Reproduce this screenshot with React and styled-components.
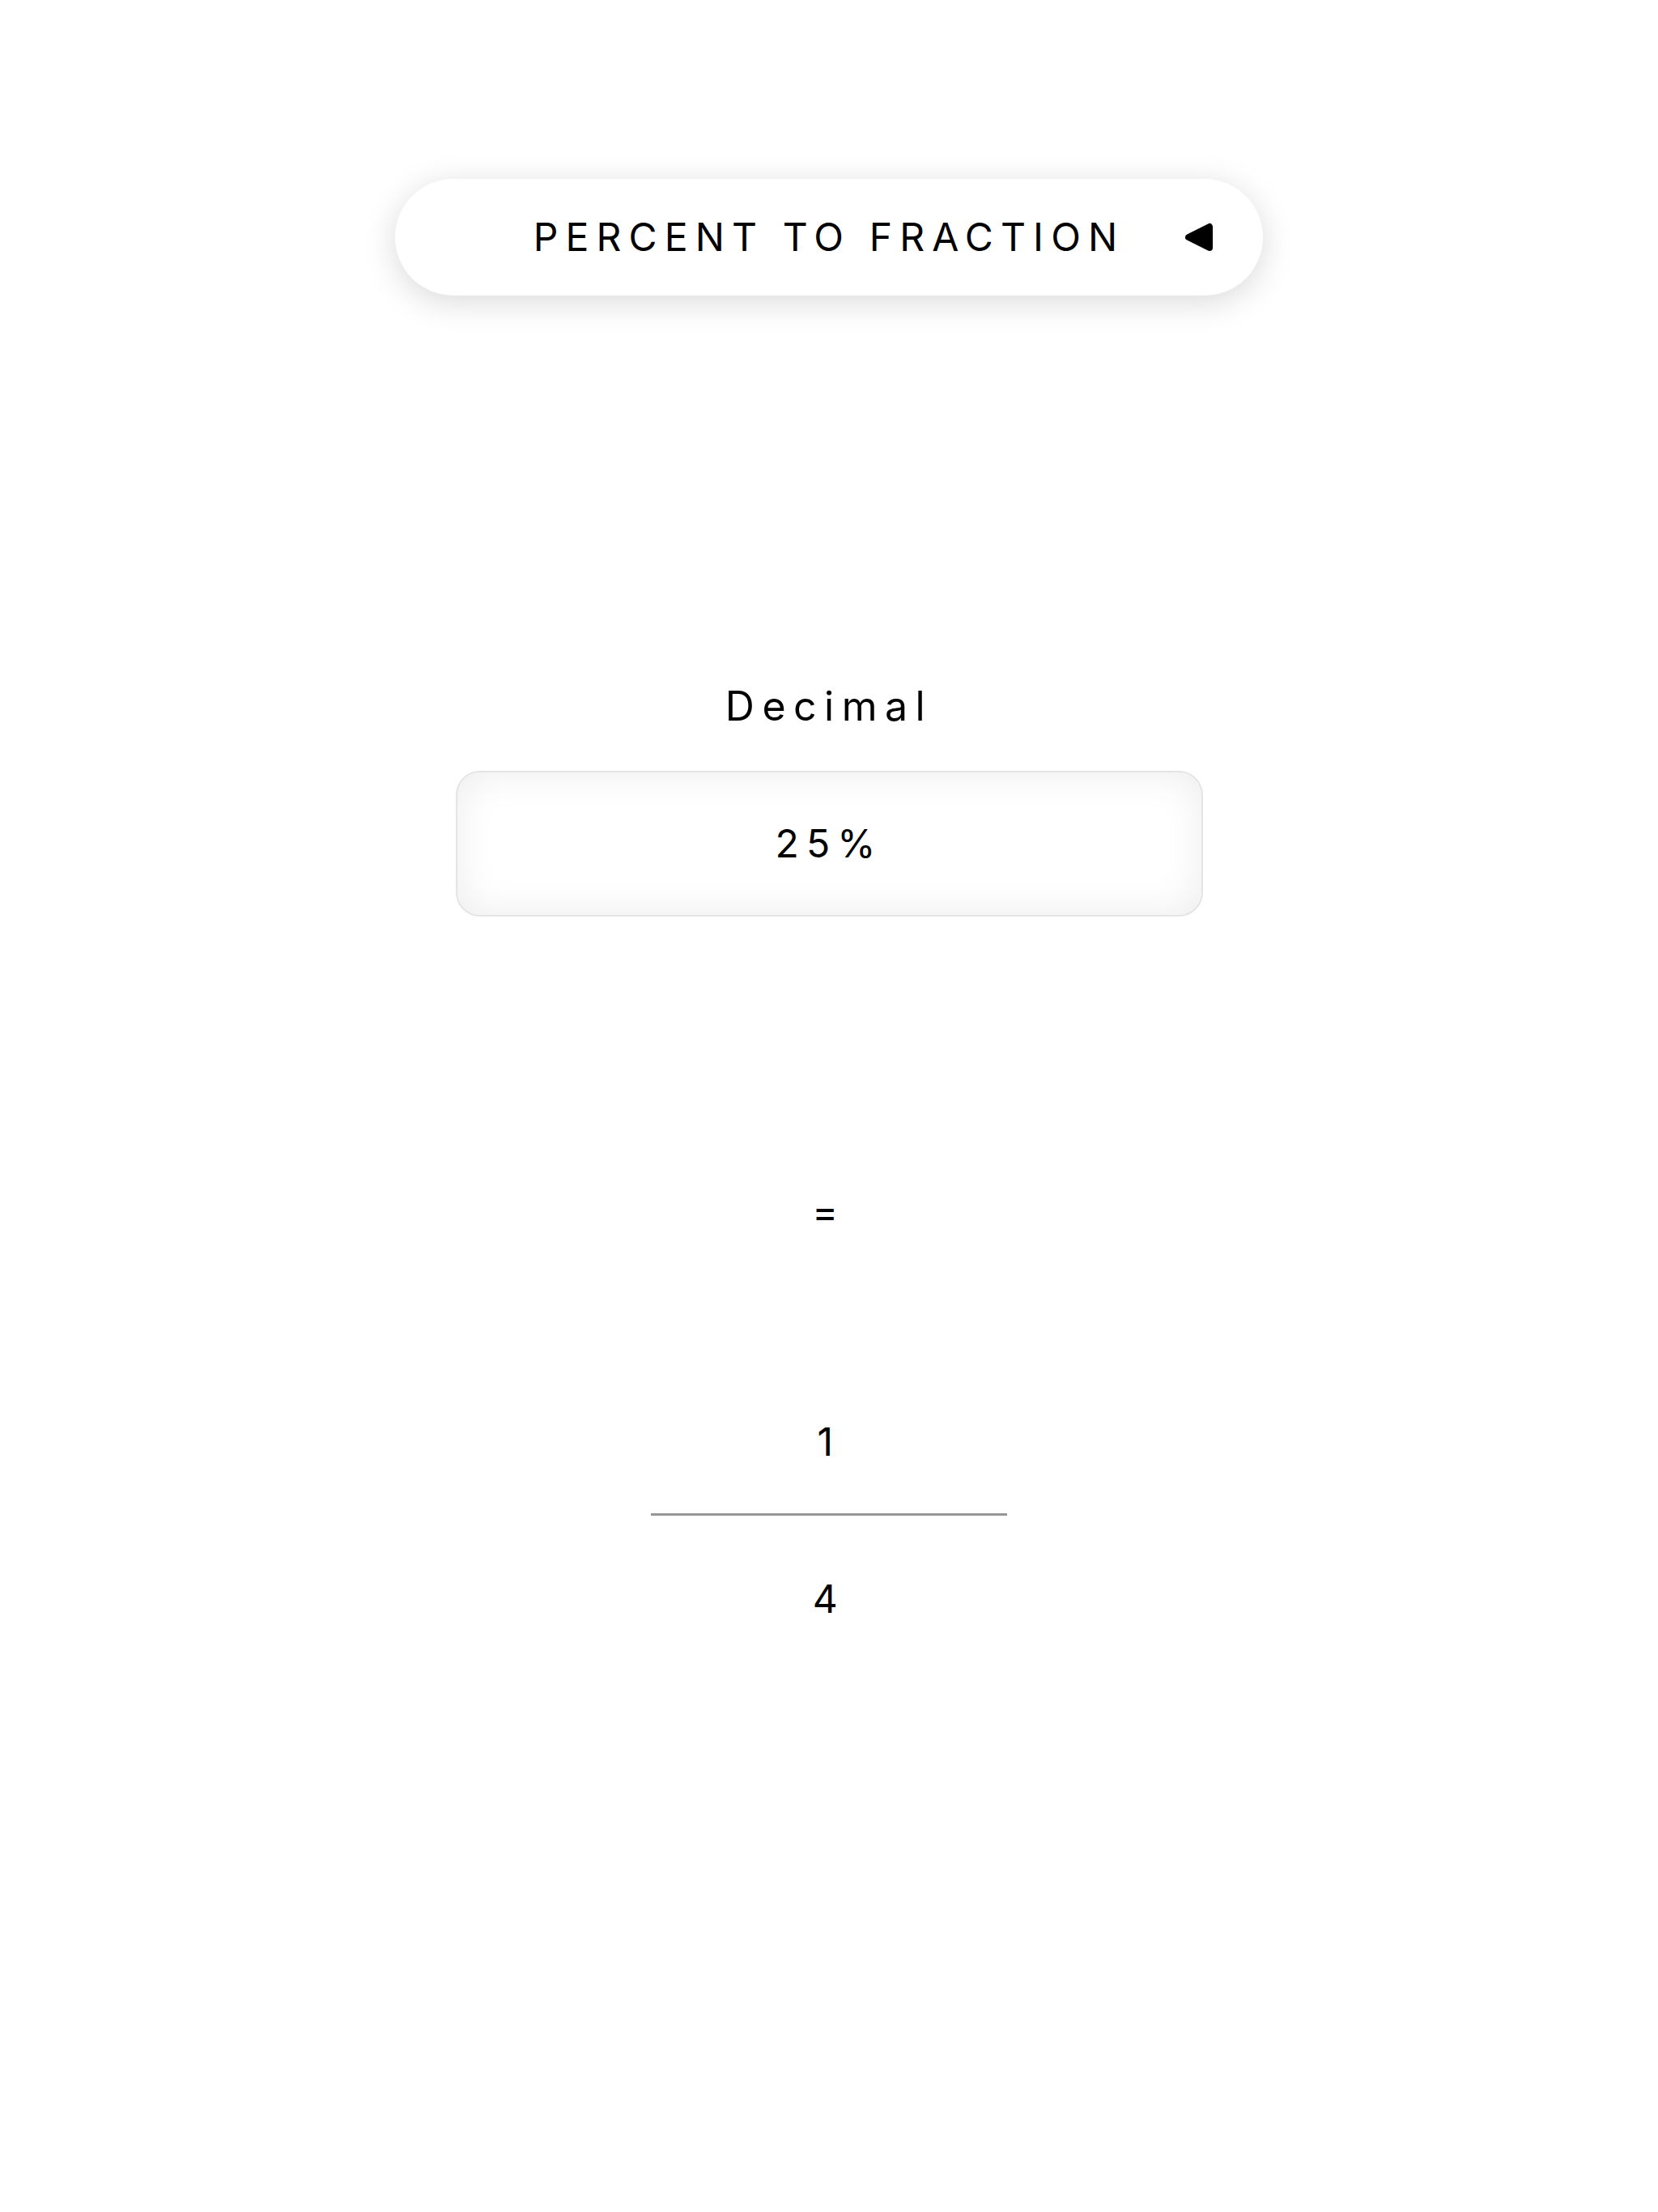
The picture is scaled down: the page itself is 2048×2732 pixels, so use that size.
import React from "react";
import styled, { createGlobalStyle } from "styled-components";

const Global = createGlobalStyle`
  html, body { margin: 0; padding: 0; background: #ffffff; }
  body { font-family: Inter, "Noto Sans", sans-serif; color: #000; }
`;

const Page = styled.main`
  display: flex;
  flex-direction: column;
  align-items: center;
  padding-top: 221px;
  min-height: 2732px;
  box-sizing: border-box;
`;

const Pill = styled.header`
  width: 1072px;
  height: 144px;
  box-sizing: border-box;
  border-radius: 72px;
  background: #fff;
  box-shadow: 0 8px 40px rgba(0, 0, 0, 0.15);
  display: grid;
  grid-template-columns: 1fr auto 1fr;
  align-items: center;
  padding: 0 61px;
`;

const Title = styled.h1`
  grid-column: 2;
  margin: 0;
  font-size: 48px;
  font-weight: 400;
  line-height: 1;
  letter-spacing: 0.19em;
  white-space: nowrap;
`;

const Toggle = styled.button`
  grid-column: 3;
  justify-self: end;
  border: 0;
  padding: 0;
  background: none;
  display: flex;
  width: 36px;
  height: 36px;
`;

const Label = styled.label`
  margin-top: 483px;
  font-size: 50px;
  line-height: 48px;
  letter-spacing: 0.19em;
`;

const Field = styled.div`
  margin-top: 56px;
  width: 923px;
  height: 180px;
  box-sizing: border-box;
  border: 2px solid #e4e4e4;
  border-radius: 30px;
  box-shadow: inset 0 0 50px rgba(0, 0, 0, 0.08);
  display: flex;
  align-items: center;
  justify-content: center;
  font-size: 48px;
  line-height: 1;
  letter-spacing: 0.19em;
`;

const Symbol = styled.div`
  font-size: 48px;
  line-height: 1;
  letter-spacing: 0.2em;
  margin-top: ${(p) => p.$gap}px;
`;

const Bar = styled.hr`
  width: 440px;
  height: 3px;
  border: 0;
  margin: ${(p) => p.$top}px 0 0;
  background: #969696;
`;

export default function App() {
  return (
    <>
      <Global />
      <Page>
        <Pill>
          <Title>PERCENT TO FRACTION</Title>
          <Toggle aria-label="toggle">
            <svg width="36" height="36" viewBox="0 0 36 36">
              <polygon
                points="5,18 31,5 31,31"
                fill="#000"
                stroke="#000"
                strokeWidth="8"
                strokeLinejoin="round"
              />
            </svg>
          </Toggle>
        </Pill>
        <Label>Decimal</Label>
        <Field>25%</Field>
        <Symbol $gap={341}>=</Symbol>
        <Symbol $gap={236}>1</Symbol>
        <Bar $top={64} />
        <Symbol $gap={79}>4</Symbol>
      </Page>
    </>
  );
}
